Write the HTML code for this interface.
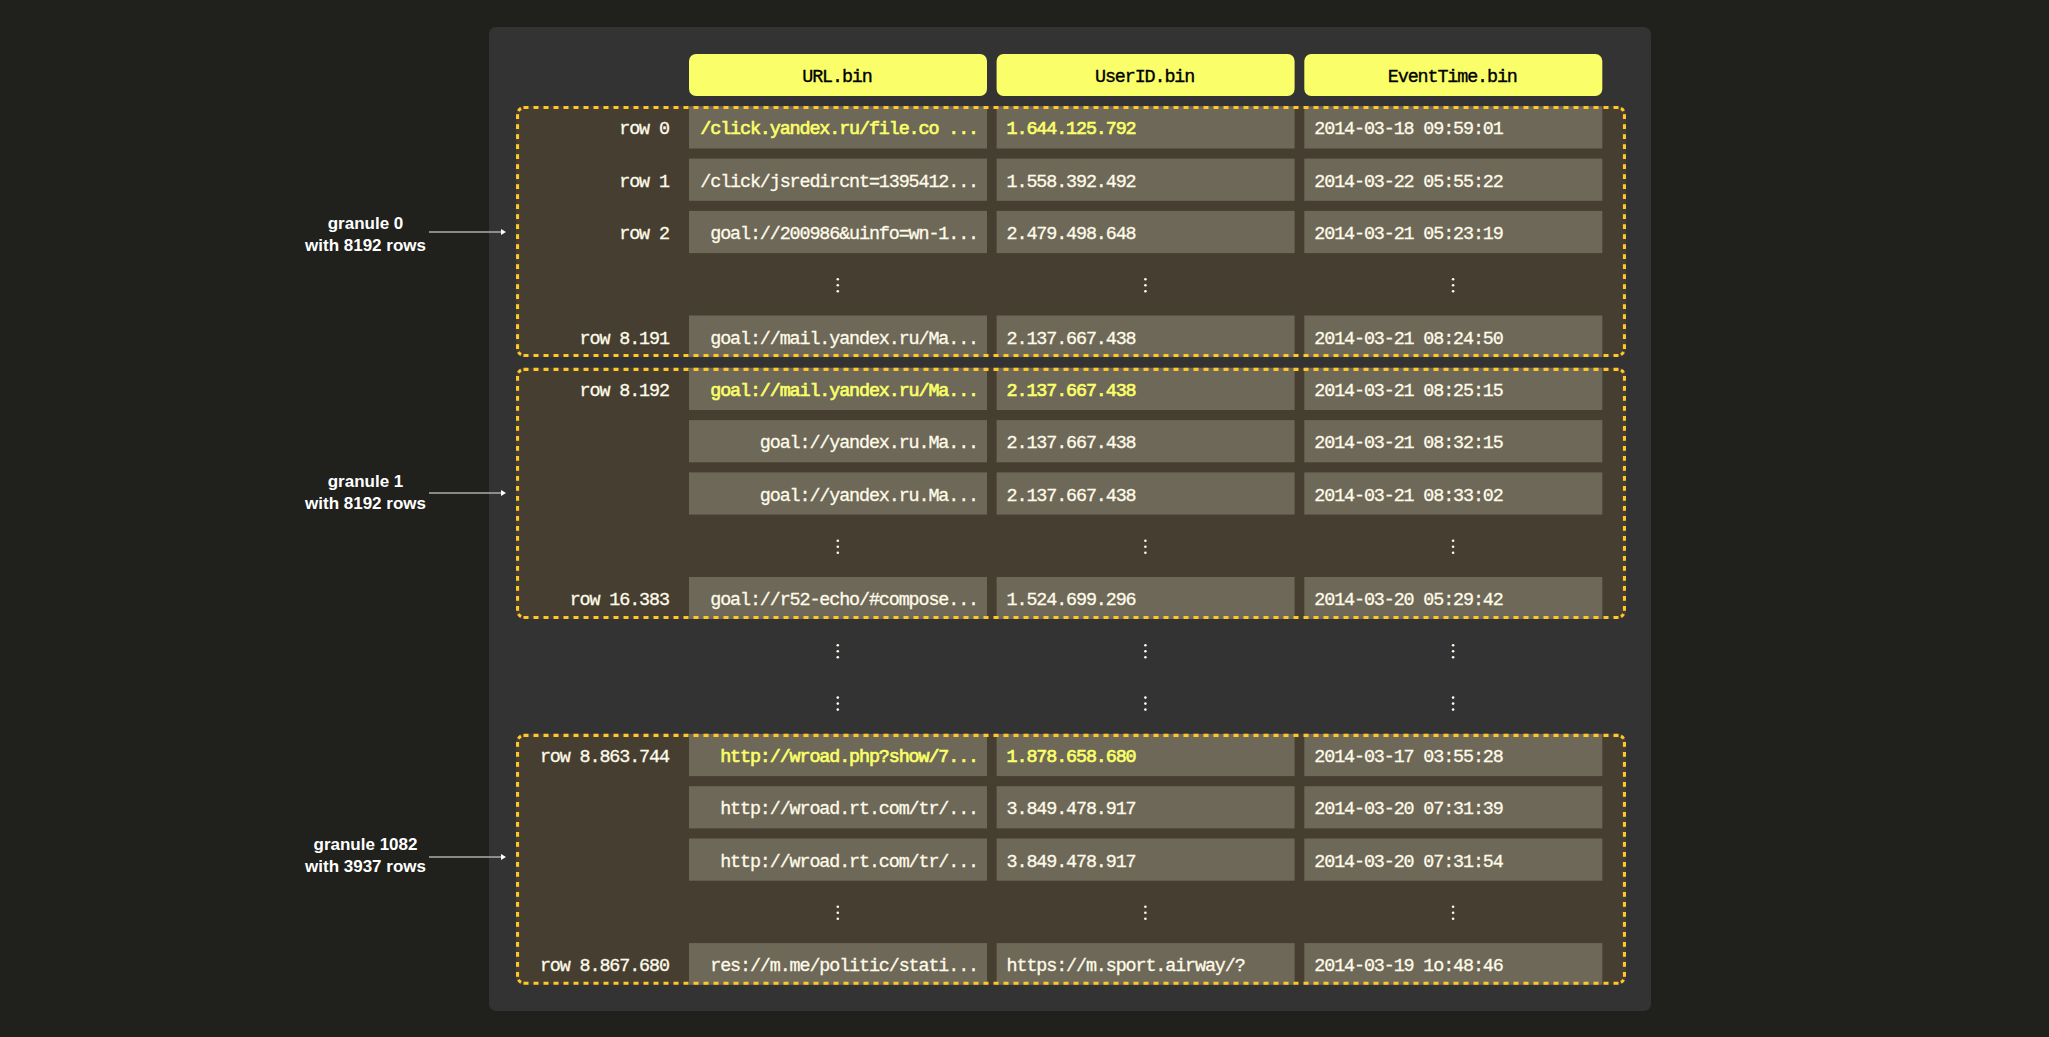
<!DOCTYPE html>
<html><head><meta charset="utf-8"><style>
html,body{margin:0;padding:0;}
body{width:2049px;height:1037px;background:#20201c;position:relative;overflow:hidden;font-family:"Liberation Mono",monospace;}
svg{position:absolute;left:0;top:0;}
.t{position:absolute;white-space:pre;font-size:18.4px;letter-spacing:-1.12px;line-height:42.2px;height:42.2px;color:#fffbe9;-webkit-text-stroke:0.3px #fffbe9;}
.y{color:#faff69;-webkit-text-stroke:0.65px #faff69;}
.h{color:#000;text-align:center;-webkit-text-stroke:0.35px #000;}
.lab{position:absolute;white-space:pre;font-family:"Liberation Sans",sans-serif;font-weight:bold;font-size:17px;line-height:22px;color:#fff;text-align:center;width:200px;}
</style></head><body>

<svg width="2049" height="1037">
<rect x="489" y="27" width="1162" height="984" rx="7" fill="#333333"/>
<rect x="689.0" y="53.9" width="298.0" height="42.1" rx="7" fill="#faff69"/>
<rect x="996.6" y="53.9" width="298.0" height="42.1" rx="7" fill="#faff69"/>
<rect x="1304.3" y="53.9" width="298.0" height="42.1" rx="7" fill="#faff69"/>
<rect x="516" y="106.0" width="1110" height="251.10" rx="8" fill="#463f31"/>
<rect x="516" y="367.8" width="1110" height="251.20" rx="8" fill="#463f31"/>
<rect x="516" y="733.8" width="1110" height="251.00" rx="8" fill="#463f31"/>
<rect x="689.0" y="106.30" width="298.0" height="42.20" fill="#6e6858"/>
<rect x="996.6" y="106.30" width="298.0" height="42.20" fill="#6e6858"/>
<rect x="1304.3" y="106.30" width="298.0" height="42.20" fill="#6e6858"/>
<rect x="689.0" y="158.60" width="298.0" height="42.20" fill="#6e6858"/>
<rect x="996.6" y="158.60" width="298.0" height="42.20" fill="#6e6858"/>
<rect x="1304.3" y="158.60" width="298.0" height="42.20" fill="#6e6858"/>
<rect x="689.0" y="210.90" width="298.0" height="42.20" fill="#6e6858"/>
<rect x="996.6" y="210.90" width="298.0" height="42.20" fill="#6e6858"/>
<rect x="1304.3" y="210.90" width="298.0" height="42.20" fill="#6e6858"/>
<rect x="689.0" y="315.50" width="298.0" height="41.60" fill="#6e6858"/>
<rect x="996.6" y="315.50" width="298.0" height="41.60" fill="#6e6858"/>
<rect x="1304.3" y="315.50" width="298.0" height="41.60" fill="#6e6858"/>
<rect x="689.0" y="367.80" width="298.0" height="42.20" fill="#6e6858"/>
<rect x="996.6" y="367.80" width="298.0" height="42.20" fill="#6e6858"/>
<rect x="1304.3" y="367.80" width="298.0" height="42.20" fill="#6e6858"/>
<rect x="689.0" y="420.10" width="298.0" height="42.20" fill="#6e6858"/>
<rect x="996.6" y="420.10" width="298.0" height="42.20" fill="#6e6858"/>
<rect x="1304.3" y="420.10" width="298.0" height="42.20" fill="#6e6858"/>
<rect x="689.0" y="472.40" width="298.0" height="42.20" fill="#6e6858"/>
<rect x="996.6" y="472.40" width="298.0" height="42.20" fill="#6e6858"/>
<rect x="1304.3" y="472.40" width="298.0" height="42.20" fill="#6e6858"/>
<rect x="689.0" y="577.00" width="298.0" height="42.00" fill="#6e6858"/>
<rect x="996.6" y="577.00" width="298.0" height="42.00" fill="#6e6858"/>
<rect x="1304.3" y="577.00" width="298.0" height="42.00" fill="#6e6858"/>
<rect x="689.0" y="733.90" width="298.0" height="42.20" fill="#6e6858"/>
<rect x="996.6" y="733.90" width="298.0" height="42.20" fill="#6e6858"/>
<rect x="1304.3" y="733.90" width="298.0" height="42.20" fill="#6e6858"/>
<rect x="689.0" y="786.20" width="298.0" height="42.20" fill="#6e6858"/>
<rect x="996.6" y="786.20" width="298.0" height="42.20" fill="#6e6858"/>
<rect x="1304.3" y="786.20" width="298.0" height="42.20" fill="#6e6858"/>
<rect x="689.0" y="838.50" width="298.0" height="42.20" fill="#6e6858"/>
<rect x="996.6" y="838.50" width="298.0" height="42.20" fill="#6e6858"/>
<rect x="1304.3" y="838.50" width="298.0" height="42.20" fill="#6e6858"/>
<rect x="689.0" y="943.10" width="298.0" height="41.70" fill="#6e6858"/>
<rect x="996.6" y="943.10" width="298.0" height="41.70" fill="#6e6858"/>
<rect x="1304.3" y="943.10" width="298.0" height="41.70" fill="#6e6858"/>
<line x1="523.5" y1="107.55" x2="1618.5" y2="107.55" stroke="#ffc72a" stroke-width="3.1" fill="none" stroke-dasharray="5 5"/>
<line x1="523.5" y1="355.55" x2="1618.5" y2="355.55" stroke="#ffc72a" stroke-width="3.1" fill="none" stroke-dasharray="5 5"/>
<line x1="517.55" y1="114.20" x2="517.55" y2="119.00" stroke="#ffc72a" stroke-width="3.1" fill="none"/>
<line x1="517.55" y1="124.20" x2="517.55" y2="129.00" stroke="#ffc72a" stroke-width="3.1" fill="none"/>
<line x1="517.55" y1="134.20" x2="517.55" y2="139.00" stroke="#ffc72a" stroke-width="3.1" fill="none"/>
<line x1="517.55" y1="144.20" x2="517.55" y2="149.00" stroke="#ffc72a" stroke-width="3.1" fill="none"/>
<line x1="517.55" y1="154.20" x2="517.55" y2="159.00" stroke="#ffc72a" stroke-width="3.1" fill="none"/>
<line x1="517.55" y1="164.20" x2="517.55" y2="169.00" stroke="#ffc72a" stroke-width="3.1" fill="none"/>
<line x1="517.55" y1="174.20" x2="517.55" y2="179.00" stroke="#ffc72a" stroke-width="3.1" fill="none"/>
<line x1="517.55" y1="184.20" x2="517.55" y2="189.00" stroke="#ffc72a" stroke-width="3.1" fill="none"/>
<line x1="517.55" y1="194.20" x2="517.55" y2="199.00" stroke="#ffc72a" stroke-width="3.1" fill="none"/>
<line x1="517.55" y1="204.20" x2="517.55" y2="209.00" stroke="#ffc72a" stroke-width="3.1" fill="none"/>
<line x1="517.55" y1="214.20" x2="517.55" y2="219.00" stroke="#ffc72a" stroke-width="3.1" fill="none"/>
<line x1="517.55" y1="224.20" x2="517.55" y2="229.00" stroke="#ffc72a" stroke-width="3.1" fill="none"/>
<line x1="517.55" y1="234.20" x2="517.55" y2="239.00" stroke="#ffc72a" stroke-width="3.1" fill="none"/>
<line x1="517.55" y1="244.20" x2="517.55" y2="249.00" stroke="#ffc72a" stroke-width="3.1" fill="none"/>
<line x1="517.55" y1="254.20" x2="517.55" y2="259.00" stroke="#ffc72a" stroke-width="3.1" fill="none"/>
<line x1="517.55" y1="264.20" x2="517.55" y2="269.00" stroke="#ffc72a" stroke-width="3.1" fill="none"/>
<line x1="517.55" y1="274.20" x2="517.55" y2="279.00" stroke="#ffc72a" stroke-width="3.1" fill="none"/>
<line x1="517.55" y1="284.20" x2="517.55" y2="289.00" stroke="#ffc72a" stroke-width="3.1" fill="none"/>
<line x1="517.55" y1="294.20" x2="517.55" y2="299.00" stroke="#ffc72a" stroke-width="3.1" fill="none"/>
<line x1="517.55" y1="304.20" x2="517.55" y2="309.00" stroke="#ffc72a" stroke-width="3.1" fill="none"/>
<line x1="517.55" y1="314.20" x2="517.55" y2="319.00" stroke="#ffc72a" stroke-width="3.1" fill="none"/>
<line x1="517.55" y1="324.20" x2="517.55" y2="329.00" stroke="#ffc72a" stroke-width="3.1" fill="none"/>
<line x1="517.55" y1="334.20" x2="517.55" y2="339.00" stroke="#ffc72a" stroke-width="3.1" fill="none"/>
<line x1="517.55" y1="344.20" x2="517.55" y2="349.00" stroke="#ffc72a" stroke-width="3.1" fill="none"/>
<line x1="1624.45" y1="114.20" x2="1624.45" y2="119.00" stroke="#ffc72a" stroke-width="3.1" fill="none"/>
<line x1="1624.45" y1="124.20" x2="1624.45" y2="129.00" stroke="#ffc72a" stroke-width="3.1" fill="none"/>
<line x1="1624.45" y1="134.20" x2="1624.45" y2="139.00" stroke="#ffc72a" stroke-width="3.1" fill="none"/>
<line x1="1624.45" y1="144.20" x2="1624.45" y2="149.00" stroke="#ffc72a" stroke-width="3.1" fill="none"/>
<line x1="1624.45" y1="154.20" x2="1624.45" y2="159.00" stroke="#ffc72a" stroke-width="3.1" fill="none"/>
<line x1="1624.45" y1="164.20" x2="1624.45" y2="169.00" stroke="#ffc72a" stroke-width="3.1" fill="none"/>
<line x1="1624.45" y1="174.20" x2="1624.45" y2="179.00" stroke="#ffc72a" stroke-width="3.1" fill="none"/>
<line x1="1624.45" y1="184.20" x2="1624.45" y2="189.00" stroke="#ffc72a" stroke-width="3.1" fill="none"/>
<line x1="1624.45" y1="194.20" x2="1624.45" y2="199.00" stroke="#ffc72a" stroke-width="3.1" fill="none"/>
<line x1="1624.45" y1="204.20" x2="1624.45" y2="209.00" stroke="#ffc72a" stroke-width="3.1" fill="none"/>
<line x1="1624.45" y1="214.20" x2="1624.45" y2="219.00" stroke="#ffc72a" stroke-width="3.1" fill="none"/>
<line x1="1624.45" y1="224.20" x2="1624.45" y2="229.00" stroke="#ffc72a" stroke-width="3.1" fill="none"/>
<line x1="1624.45" y1="234.20" x2="1624.45" y2="239.00" stroke="#ffc72a" stroke-width="3.1" fill="none"/>
<line x1="1624.45" y1="244.20" x2="1624.45" y2="249.00" stroke="#ffc72a" stroke-width="3.1" fill="none"/>
<line x1="1624.45" y1="254.20" x2="1624.45" y2="259.00" stroke="#ffc72a" stroke-width="3.1" fill="none"/>
<line x1="1624.45" y1="264.20" x2="1624.45" y2="269.00" stroke="#ffc72a" stroke-width="3.1" fill="none"/>
<line x1="1624.45" y1="274.20" x2="1624.45" y2="279.00" stroke="#ffc72a" stroke-width="3.1" fill="none"/>
<line x1="1624.45" y1="284.20" x2="1624.45" y2="289.00" stroke="#ffc72a" stroke-width="3.1" fill="none"/>
<line x1="1624.45" y1="294.20" x2="1624.45" y2="299.00" stroke="#ffc72a" stroke-width="3.1" fill="none"/>
<line x1="1624.45" y1="304.20" x2="1624.45" y2="309.00" stroke="#ffc72a" stroke-width="3.1" fill="none"/>
<line x1="1624.45" y1="314.20" x2="1624.45" y2="319.00" stroke="#ffc72a" stroke-width="3.1" fill="none"/>
<line x1="1624.45" y1="324.20" x2="1624.45" y2="329.00" stroke="#ffc72a" stroke-width="3.1" fill="none"/>
<line x1="1624.45" y1="334.20" x2="1624.45" y2="339.00" stroke="#ffc72a" stroke-width="3.1" fill="none"/>
<line x1="1624.45" y1="344.20" x2="1624.45" y2="349.00" stroke="#ffc72a" stroke-width="3.1" fill="none"/>
<path d="M518.44 111.04 A6.3 6.3 0 0 1 521.04 108.44" stroke="#ffc72a" stroke-width="3.1" fill="none"/>
<path d="M1620.96 108.44 A6.3 6.3 0 0 1 1623.56 111.04" stroke="#ffc72a" stroke-width="3.1" fill="none"/>
<path d="M521.04 354.66 A6.3 6.3 0 0 1 518.44 352.06" stroke="#ffc72a" stroke-width="3.1" fill="none"/>
<path d="M1623.56 352.06 A6.3 6.3 0 0 1 1620.96 354.66" stroke="#ffc72a" stroke-width="3.1" fill="none"/>
<line x1="523.5" y1="369.35" x2="1618.5" y2="369.35" stroke="#ffc72a" stroke-width="3.1" fill="none" stroke-dasharray="5 5"/>
<line x1="523.5" y1="617.45" x2="1618.5" y2="617.45" stroke="#ffc72a" stroke-width="3.1" fill="none" stroke-dasharray="5 5"/>
<line x1="517.55" y1="376.00" x2="517.55" y2="380.80" stroke="#ffc72a" stroke-width="3.1" fill="none"/>
<line x1="517.55" y1="386.00" x2="517.55" y2="390.80" stroke="#ffc72a" stroke-width="3.1" fill="none"/>
<line x1="517.55" y1="396.00" x2="517.55" y2="400.80" stroke="#ffc72a" stroke-width="3.1" fill="none"/>
<line x1="517.55" y1="406.00" x2="517.55" y2="410.80" stroke="#ffc72a" stroke-width="3.1" fill="none"/>
<line x1="517.55" y1="416.00" x2="517.55" y2="420.80" stroke="#ffc72a" stroke-width="3.1" fill="none"/>
<line x1="517.55" y1="426.00" x2="517.55" y2="430.80" stroke="#ffc72a" stroke-width="3.1" fill="none"/>
<line x1="517.55" y1="436.00" x2="517.55" y2="440.80" stroke="#ffc72a" stroke-width="3.1" fill="none"/>
<line x1="517.55" y1="446.00" x2="517.55" y2="450.80" stroke="#ffc72a" stroke-width="3.1" fill="none"/>
<line x1="517.55" y1="456.00" x2="517.55" y2="460.80" stroke="#ffc72a" stroke-width="3.1" fill="none"/>
<line x1="517.55" y1="466.00" x2="517.55" y2="470.80" stroke="#ffc72a" stroke-width="3.1" fill="none"/>
<line x1="517.55" y1="476.00" x2="517.55" y2="480.80" stroke="#ffc72a" stroke-width="3.1" fill="none"/>
<line x1="517.55" y1="486.00" x2="517.55" y2="490.80" stroke="#ffc72a" stroke-width="3.1" fill="none"/>
<line x1="517.55" y1="496.00" x2="517.55" y2="500.80" stroke="#ffc72a" stroke-width="3.1" fill="none"/>
<line x1="517.55" y1="506.00" x2="517.55" y2="510.80" stroke="#ffc72a" stroke-width="3.1" fill="none"/>
<line x1="517.55" y1="516.00" x2="517.55" y2="520.80" stroke="#ffc72a" stroke-width="3.1" fill="none"/>
<line x1="517.55" y1="526.00" x2="517.55" y2="530.80" stroke="#ffc72a" stroke-width="3.1" fill="none"/>
<line x1="517.55" y1="536.00" x2="517.55" y2="540.80" stroke="#ffc72a" stroke-width="3.1" fill="none"/>
<line x1="517.55" y1="546.00" x2="517.55" y2="550.80" stroke="#ffc72a" stroke-width="3.1" fill="none"/>
<line x1="517.55" y1="556.00" x2="517.55" y2="560.80" stroke="#ffc72a" stroke-width="3.1" fill="none"/>
<line x1="517.55" y1="566.00" x2="517.55" y2="570.80" stroke="#ffc72a" stroke-width="3.1" fill="none"/>
<line x1="517.55" y1="576.00" x2="517.55" y2="580.80" stroke="#ffc72a" stroke-width="3.1" fill="none"/>
<line x1="517.55" y1="586.00" x2="517.55" y2="590.80" stroke="#ffc72a" stroke-width="3.1" fill="none"/>
<line x1="517.55" y1="596.00" x2="517.55" y2="600.80" stroke="#ffc72a" stroke-width="3.1" fill="none"/>
<line x1="517.55" y1="606.00" x2="517.55" y2="610.80" stroke="#ffc72a" stroke-width="3.1" fill="none"/>
<line x1="1624.45" y1="376.00" x2="1624.45" y2="380.80" stroke="#ffc72a" stroke-width="3.1" fill="none"/>
<line x1="1624.45" y1="386.00" x2="1624.45" y2="390.80" stroke="#ffc72a" stroke-width="3.1" fill="none"/>
<line x1="1624.45" y1="396.00" x2="1624.45" y2="400.80" stroke="#ffc72a" stroke-width="3.1" fill="none"/>
<line x1="1624.45" y1="406.00" x2="1624.45" y2="410.80" stroke="#ffc72a" stroke-width="3.1" fill="none"/>
<line x1="1624.45" y1="416.00" x2="1624.45" y2="420.80" stroke="#ffc72a" stroke-width="3.1" fill="none"/>
<line x1="1624.45" y1="426.00" x2="1624.45" y2="430.80" stroke="#ffc72a" stroke-width="3.1" fill="none"/>
<line x1="1624.45" y1="436.00" x2="1624.45" y2="440.80" stroke="#ffc72a" stroke-width="3.1" fill="none"/>
<line x1="1624.45" y1="446.00" x2="1624.45" y2="450.80" stroke="#ffc72a" stroke-width="3.1" fill="none"/>
<line x1="1624.45" y1="456.00" x2="1624.45" y2="460.80" stroke="#ffc72a" stroke-width="3.1" fill="none"/>
<line x1="1624.45" y1="466.00" x2="1624.45" y2="470.80" stroke="#ffc72a" stroke-width="3.1" fill="none"/>
<line x1="1624.45" y1="476.00" x2="1624.45" y2="480.80" stroke="#ffc72a" stroke-width="3.1" fill="none"/>
<line x1="1624.45" y1="486.00" x2="1624.45" y2="490.80" stroke="#ffc72a" stroke-width="3.1" fill="none"/>
<line x1="1624.45" y1="496.00" x2="1624.45" y2="500.80" stroke="#ffc72a" stroke-width="3.1" fill="none"/>
<line x1="1624.45" y1="506.00" x2="1624.45" y2="510.80" stroke="#ffc72a" stroke-width="3.1" fill="none"/>
<line x1="1624.45" y1="516.00" x2="1624.45" y2="520.80" stroke="#ffc72a" stroke-width="3.1" fill="none"/>
<line x1="1624.45" y1="526.00" x2="1624.45" y2="530.80" stroke="#ffc72a" stroke-width="3.1" fill="none"/>
<line x1="1624.45" y1="536.00" x2="1624.45" y2="540.80" stroke="#ffc72a" stroke-width="3.1" fill="none"/>
<line x1="1624.45" y1="546.00" x2="1624.45" y2="550.80" stroke="#ffc72a" stroke-width="3.1" fill="none"/>
<line x1="1624.45" y1="556.00" x2="1624.45" y2="560.80" stroke="#ffc72a" stroke-width="3.1" fill="none"/>
<line x1="1624.45" y1="566.00" x2="1624.45" y2="570.80" stroke="#ffc72a" stroke-width="3.1" fill="none"/>
<line x1="1624.45" y1="576.00" x2="1624.45" y2="580.80" stroke="#ffc72a" stroke-width="3.1" fill="none"/>
<line x1="1624.45" y1="586.00" x2="1624.45" y2="590.80" stroke="#ffc72a" stroke-width="3.1" fill="none"/>
<line x1="1624.45" y1="596.00" x2="1624.45" y2="600.80" stroke="#ffc72a" stroke-width="3.1" fill="none"/>
<line x1="1624.45" y1="606.00" x2="1624.45" y2="610.80" stroke="#ffc72a" stroke-width="3.1" fill="none"/>
<path d="M518.44 372.84 A6.3 6.3 0 0 1 521.04 370.24" stroke="#ffc72a" stroke-width="3.1" fill="none"/>
<path d="M1620.96 370.24 A6.3 6.3 0 0 1 1623.56 372.84" stroke="#ffc72a" stroke-width="3.1" fill="none"/>
<path d="M521.04 616.56 A6.3 6.3 0 0 1 518.44 613.96" stroke="#ffc72a" stroke-width="3.1" fill="none"/>
<path d="M1623.56 613.96 A6.3 6.3 0 0 1 1620.96 616.56" stroke="#ffc72a" stroke-width="3.1" fill="none"/>
<line x1="523.5" y1="735.35" x2="1618.5" y2="735.35" stroke="#ffc72a" stroke-width="3.1" fill="none" stroke-dasharray="5 5"/>
<line x1="523.5" y1="983.25" x2="1618.5" y2="983.25" stroke="#ffc72a" stroke-width="3.1" fill="none" stroke-dasharray="5 5"/>
<line x1="517.55" y1="742.00" x2="517.55" y2="746.80" stroke="#ffc72a" stroke-width="3.1" fill="none"/>
<line x1="517.55" y1="752.00" x2="517.55" y2="756.80" stroke="#ffc72a" stroke-width="3.1" fill="none"/>
<line x1="517.55" y1="762.00" x2="517.55" y2="766.80" stroke="#ffc72a" stroke-width="3.1" fill="none"/>
<line x1="517.55" y1="772.00" x2="517.55" y2="776.80" stroke="#ffc72a" stroke-width="3.1" fill="none"/>
<line x1="517.55" y1="782.00" x2="517.55" y2="786.80" stroke="#ffc72a" stroke-width="3.1" fill="none"/>
<line x1="517.55" y1="792.00" x2="517.55" y2="796.80" stroke="#ffc72a" stroke-width="3.1" fill="none"/>
<line x1="517.55" y1="802.00" x2="517.55" y2="806.80" stroke="#ffc72a" stroke-width="3.1" fill="none"/>
<line x1="517.55" y1="812.00" x2="517.55" y2="816.80" stroke="#ffc72a" stroke-width="3.1" fill="none"/>
<line x1="517.55" y1="822.00" x2="517.55" y2="826.80" stroke="#ffc72a" stroke-width="3.1" fill="none"/>
<line x1="517.55" y1="832.00" x2="517.55" y2="836.80" stroke="#ffc72a" stroke-width="3.1" fill="none"/>
<line x1="517.55" y1="842.00" x2="517.55" y2="846.80" stroke="#ffc72a" stroke-width="3.1" fill="none"/>
<line x1="517.55" y1="852.00" x2="517.55" y2="856.80" stroke="#ffc72a" stroke-width="3.1" fill="none"/>
<line x1="517.55" y1="862.00" x2="517.55" y2="866.80" stroke="#ffc72a" stroke-width="3.1" fill="none"/>
<line x1="517.55" y1="872.00" x2="517.55" y2="876.80" stroke="#ffc72a" stroke-width="3.1" fill="none"/>
<line x1="517.55" y1="882.00" x2="517.55" y2="886.80" stroke="#ffc72a" stroke-width="3.1" fill="none"/>
<line x1="517.55" y1="892.00" x2="517.55" y2="896.80" stroke="#ffc72a" stroke-width="3.1" fill="none"/>
<line x1="517.55" y1="902.00" x2="517.55" y2="906.80" stroke="#ffc72a" stroke-width="3.1" fill="none"/>
<line x1="517.55" y1="912.00" x2="517.55" y2="916.80" stroke="#ffc72a" stroke-width="3.1" fill="none"/>
<line x1="517.55" y1="922.00" x2="517.55" y2="926.80" stroke="#ffc72a" stroke-width="3.1" fill="none"/>
<line x1="517.55" y1="932.00" x2="517.55" y2="936.80" stroke="#ffc72a" stroke-width="3.1" fill="none"/>
<line x1="517.55" y1="942.00" x2="517.55" y2="946.80" stroke="#ffc72a" stroke-width="3.1" fill="none"/>
<line x1="517.55" y1="952.00" x2="517.55" y2="956.80" stroke="#ffc72a" stroke-width="3.1" fill="none"/>
<line x1="517.55" y1="962.00" x2="517.55" y2="966.80" stroke="#ffc72a" stroke-width="3.1" fill="none"/>
<line x1="517.55" y1="972.00" x2="517.55" y2="976.80" stroke="#ffc72a" stroke-width="3.1" fill="none"/>
<line x1="1624.45" y1="742.00" x2="1624.45" y2="746.80" stroke="#ffc72a" stroke-width="3.1" fill="none"/>
<line x1="1624.45" y1="752.00" x2="1624.45" y2="756.80" stroke="#ffc72a" stroke-width="3.1" fill="none"/>
<line x1="1624.45" y1="762.00" x2="1624.45" y2="766.80" stroke="#ffc72a" stroke-width="3.1" fill="none"/>
<line x1="1624.45" y1="772.00" x2="1624.45" y2="776.80" stroke="#ffc72a" stroke-width="3.1" fill="none"/>
<line x1="1624.45" y1="782.00" x2="1624.45" y2="786.80" stroke="#ffc72a" stroke-width="3.1" fill="none"/>
<line x1="1624.45" y1="792.00" x2="1624.45" y2="796.80" stroke="#ffc72a" stroke-width="3.1" fill="none"/>
<line x1="1624.45" y1="802.00" x2="1624.45" y2="806.80" stroke="#ffc72a" stroke-width="3.1" fill="none"/>
<line x1="1624.45" y1="812.00" x2="1624.45" y2="816.80" stroke="#ffc72a" stroke-width="3.1" fill="none"/>
<line x1="1624.45" y1="822.00" x2="1624.45" y2="826.80" stroke="#ffc72a" stroke-width="3.1" fill="none"/>
<line x1="1624.45" y1="832.00" x2="1624.45" y2="836.80" stroke="#ffc72a" stroke-width="3.1" fill="none"/>
<line x1="1624.45" y1="842.00" x2="1624.45" y2="846.80" stroke="#ffc72a" stroke-width="3.1" fill="none"/>
<line x1="1624.45" y1="852.00" x2="1624.45" y2="856.80" stroke="#ffc72a" stroke-width="3.1" fill="none"/>
<line x1="1624.45" y1="862.00" x2="1624.45" y2="866.80" stroke="#ffc72a" stroke-width="3.1" fill="none"/>
<line x1="1624.45" y1="872.00" x2="1624.45" y2="876.80" stroke="#ffc72a" stroke-width="3.1" fill="none"/>
<line x1="1624.45" y1="882.00" x2="1624.45" y2="886.80" stroke="#ffc72a" stroke-width="3.1" fill="none"/>
<line x1="1624.45" y1="892.00" x2="1624.45" y2="896.80" stroke="#ffc72a" stroke-width="3.1" fill="none"/>
<line x1="1624.45" y1="902.00" x2="1624.45" y2="906.80" stroke="#ffc72a" stroke-width="3.1" fill="none"/>
<line x1="1624.45" y1="912.00" x2="1624.45" y2="916.80" stroke="#ffc72a" stroke-width="3.1" fill="none"/>
<line x1="1624.45" y1="922.00" x2="1624.45" y2="926.80" stroke="#ffc72a" stroke-width="3.1" fill="none"/>
<line x1="1624.45" y1="932.00" x2="1624.45" y2="936.80" stroke="#ffc72a" stroke-width="3.1" fill="none"/>
<line x1="1624.45" y1="942.00" x2="1624.45" y2="946.80" stroke="#ffc72a" stroke-width="3.1" fill="none"/>
<line x1="1624.45" y1="952.00" x2="1624.45" y2="956.80" stroke="#ffc72a" stroke-width="3.1" fill="none"/>
<line x1="1624.45" y1="962.00" x2="1624.45" y2="966.80" stroke="#ffc72a" stroke-width="3.1" fill="none"/>
<line x1="1624.45" y1="972.00" x2="1624.45" y2="976.80" stroke="#ffc72a" stroke-width="3.1" fill="none"/>
<path d="M518.44 738.84 A6.3 6.3 0 0 1 521.04 736.24" stroke="#ffc72a" stroke-width="3.1" fill="none"/>
<path d="M1620.96 736.24 A6.3 6.3 0 0 1 1623.56 738.84" stroke="#ffc72a" stroke-width="3.1" fill="none"/>
<path d="M521.04 982.36 A6.3 6.3 0 0 1 518.44 979.76" stroke="#ffc72a" stroke-width="3.1" fill="none"/>
<path d="M1623.56 979.76 A6.3 6.3 0 0 1 1620.96 982.36" stroke="#ffc72a" stroke-width="3.1" fill="none"/>
<line x1="429" y1="232.10" x2="501" y2="232.10" stroke="#acacac" stroke-width="1.5"/>
<path d="M501 229.10 L506 232.10 L501 235.10 Z" fill="#ffffff"/>
<line x1="429" y1="493.10" x2="501" y2="493.10" stroke="#acacac" stroke-width="1.5"/>
<path d="M501 490.10 L506 493.10 L501 496.10 Z" fill="#ffffff"/>
<line x1="429" y1="856.90" x2="501" y2="856.90" stroke="#acacac" stroke-width="1.5"/>
<path d="M501 853.90 L506 856.90 L501 859.90 Z" fill="#ffffff"/>
<circle cx="837.80" cy="279.20" r="1.3" fill="#fffbe9"/>
<circle cx="837.80" cy="285.20" r="1.3" fill="#fffbe9"/>
<circle cx="837.80" cy="291.20" r="1.3" fill="#fffbe9"/>
<circle cx="1145.40" cy="279.20" r="1.3" fill="#fffbe9"/>
<circle cx="1145.40" cy="285.20" r="1.3" fill="#fffbe9"/>
<circle cx="1145.40" cy="291.20" r="1.3" fill="#fffbe9"/>
<circle cx="1453.10" cy="279.20" r="1.3" fill="#fffbe9"/>
<circle cx="1453.10" cy="285.20" r="1.3" fill="#fffbe9"/>
<circle cx="1453.10" cy="291.20" r="1.3" fill="#fffbe9"/>
<circle cx="837.80" cy="540.70" r="1.3" fill="#fffbe9"/>
<circle cx="837.80" cy="546.70" r="1.3" fill="#fffbe9"/>
<circle cx="837.80" cy="552.70" r="1.3" fill="#fffbe9"/>
<circle cx="1145.40" cy="540.70" r="1.3" fill="#fffbe9"/>
<circle cx="1145.40" cy="546.70" r="1.3" fill="#fffbe9"/>
<circle cx="1145.40" cy="552.70" r="1.3" fill="#fffbe9"/>
<circle cx="1453.10" cy="540.70" r="1.3" fill="#fffbe9"/>
<circle cx="1453.10" cy="546.70" r="1.3" fill="#fffbe9"/>
<circle cx="1453.10" cy="552.70" r="1.3" fill="#fffbe9"/>
<circle cx="837.80" cy="645.30" r="1.3" fill="#fffbe9"/>
<circle cx="837.80" cy="651.30" r="1.3" fill="#fffbe9"/>
<circle cx="837.80" cy="657.30" r="1.3" fill="#fffbe9"/>
<circle cx="1145.40" cy="645.30" r="1.3" fill="#fffbe9"/>
<circle cx="1145.40" cy="651.30" r="1.3" fill="#fffbe9"/>
<circle cx="1145.40" cy="657.30" r="1.3" fill="#fffbe9"/>
<circle cx="1453.10" cy="645.30" r="1.3" fill="#fffbe9"/>
<circle cx="1453.10" cy="651.30" r="1.3" fill="#fffbe9"/>
<circle cx="1453.10" cy="657.30" r="1.3" fill="#fffbe9"/>
<circle cx="837.80" cy="697.60" r="1.3" fill="#fffbe9"/>
<circle cx="837.80" cy="703.60" r="1.3" fill="#fffbe9"/>
<circle cx="837.80" cy="709.60" r="1.3" fill="#fffbe9"/>
<circle cx="1145.40" cy="697.60" r="1.3" fill="#fffbe9"/>
<circle cx="1145.40" cy="703.60" r="1.3" fill="#fffbe9"/>
<circle cx="1145.40" cy="709.60" r="1.3" fill="#fffbe9"/>
<circle cx="1453.10" cy="697.60" r="1.3" fill="#fffbe9"/>
<circle cx="1453.10" cy="703.60" r="1.3" fill="#fffbe9"/>
<circle cx="1453.10" cy="709.60" r="1.3" fill="#fffbe9"/>
<circle cx="837.80" cy="906.80" r="1.3" fill="#fffbe9"/>
<circle cx="837.80" cy="912.80" r="1.3" fill="#fffbe9"/>
<circle cx="837.80" cy="918.80" r="1.3" fill="#fffbe9"/>
<circle cx="1145.40" cy="906.80" r="1.3" fill="#fffbe9"/>
<circle cx="1145.40" cy="912.80" r="1.3" fill="#fffbe9"/>
<circle cx="1145.40" cy="918.80" r="1.3" fill="#fffbe9"/>
<circle cx="1453.10" cy="906.80" r="1.3" fill="#fffbe9"/>
<circle cx="1453.10" cy="912.80" r="1.3" fill="#fffbe9"/>
<circle cx="1453.10" cy="918.80" r="1.3" fill="#fffbe9"/>
</svg>
<div class="t h" style="left:688.0px;top:56.9px;width:298.0px;">URL.bin</div>
<div class="t h" style="left:995.6px;top:56.9px;width:298.0px;">UserID.bin</div>
<div class="t h" style="left:1303.3px;top:56.9px;width:298.0px;">EventTime.bin</div>
<div class="t" style="right:1380.2px;top:109.40px;">row 0</div>
<div class="t y" style="right:1071.0px;top:109.40px;">/click.yandex.ru/file.co ...</div>
<div class="t y" style="left:1006.6px;top:109.40px;">1.644.125.792</div>
<div class="t" style="left:1314.3px;top:109.40px;">2014-03-18 09:59:01</div>
<div class="t" style="right:1380.2px;top:161.70px;">row 1</div>
<div class="t" style="right:1071.0px;top:161.70px;">/click/jsredircnt=1395412...</div>
<div class="t" style="left:1006.6px;top:161.70px;">1.558.392.492</div>
<div class="t" style="left:1314.3px;top:161.70px;">2014-03-22 05:55:22</div>
<div class="t" style="right:1380.2px;top:214.00px;">row 2</div>
<div class="t" style="right:1071.0px;top:214.00px;">goal://200986&amp;uinfo=wn-1...</div>
<div class="t" style="left:1006.6px;top:214.00px;">2.479.498.648</div>
<div class="t" style="left:1314.3px;top:214.00px;">2014-03-21 05:23:19</div>
<div class="t" style="right:1380.2px;top:318.60px;">row 8.191</div>
<div class="t" style="right:1071.0px;top:318.60px;">goal://mail.yandex.ru/Ma...</div>
<div class="t" style="left:1006.6px;top:318.60px;">2.137.667.438</div>
<div class="t" style="left:1314.3px;top:318.60px;">2014-03-21 08:24:50</div>
<div class="t" style="right:1380.2px;top:370.90px;">row 8.192</div>
<div class="t y" style="right:1071.0px;top:370.90px;">goal://mail.yandex.ru/Ma...</div>
<div class="t y" style="left:1006.6px;top:370.90px;">2.137.667.438</div>
<div class="t" style="left:1314.3px;top:370.90px;">2014-03-21 08:25:15</div>
<div class="t" style="right:1071.0px;top:423.20px;">goal://yandex.ru.Ma...</div>
<div class="t" style="left:1006.6px;top:423.20px;">2.137.667.438</div>
<div class="t" style="left:1314.3px;top:423.20px;">2014-03-21 08:32:15</div>
<div class="t" style="right:1071.0px;top:475.50px;">goal://yandex.ru.Ma...</div>
<div class="t" style="left:1006.6px;top:475.50px;">2.137.667.438</div>
<div class="t" style="left:1314.3px;top:475.50px;">2014-03-21 08:33:02</div>
<div class="t" style="right:1380.2px;top:580.10px;">row 16.383</div>
<div class="t" style="right:1071.0px;top:580.10px;">goal://r52-echo/#compose...</div>
<div class="t" style="left:1006.6px;top:580.10px;">1.524.699.296</div>
<div class="t" style="left:1314.3px;top:580.10px;">2014-03-20 05:29:42</div>
<div class="t" style="right:1380.2px;top:737.00px;">row 8.863.744</div>
<div class="t y" style="right:1071.0px;top:737.00px;">http://wroad.php?show/7...</div>
<div class="t y" style="left:1006.6px;top:737.00px;">1.878.658.680</div>
<div class="t" style="left:1314.3px;top:737.00px;">2014-03-17 03:55:28</div>
<div class="t" style="right:1071.0px;top:789.30px;">http://wroad.rt.com/tr/...</div>
<div class="t" style="left:1006.6px;top:789.30px;">3.849.478.917</div>
<div class="t" style="left:1314.3px;top:789.30px;">2014-03-20 07:31:39</div>
<div class="t" style="right:1071.0px;top:841.60px;">http://wroad.rt.com/tr/...</div>
<div class="t" style="left:1006.6px;top:841.60px;">3.849.478.917</div>
<div class="t" style="left:1314.3px;top:841.60px;">2014-03-20 07:31:54</div>
<div class="t" style="right:1380.2px;top:946.20px;">row 8.867.680</div>
<div class="t" style="right:1071.0px;top:946.20px;">res://m.me/politic/stati...</div>
<div class="t" style="left:1006.6px;top:946.20px;">https://m.sport.airway/?</div>
<div class="t" style="left:1314.3px;top:946.20px;">2014-03-19 1o:48:46</div>
<div class="lab" style="left:265.5px;top:212.80px;">granule 0<br>with 8192 rows</div>
<div class="lab" style="left:265.5px;top:471.45px;">granule 1<br>with 8192 rows</div>
<div class="lab" style="left:265.5px;top:833.65px;">granule 1082<br>with 3937 rows</div>
</body></html>
